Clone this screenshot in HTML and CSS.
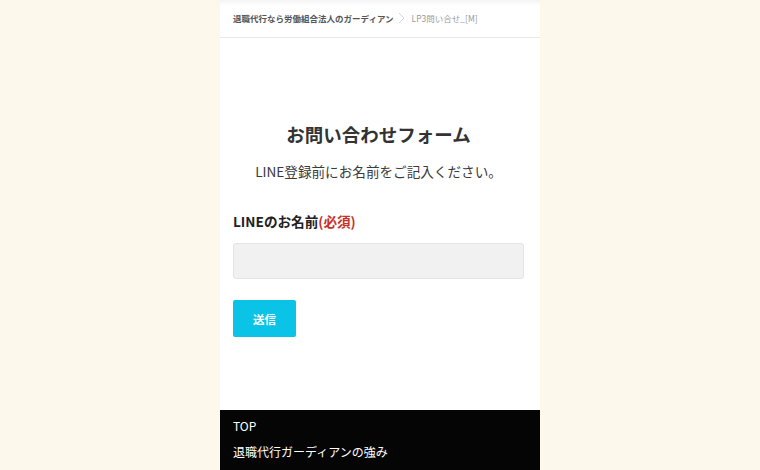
FILE: index.html
```html
<!DOCTYPE html>
<html lang="ja">
<head>
<meta charset="utf-8">
<title>LP3問い合せ_[M]</title>
<link rel="stylesheet" href="styles.css">
</head>
<body>
<div class="page">
  <nav class="crumbs">
    <span class="crumb-home">退職代行なら労働組合法人のガーディアン</span>
    <svg class="chev" width="7" height="12" viewBox="0 0 7 12"><path d="M1 1l5 5-5 5" fill="none" stroke="#d4d4d4" stroke-width="1"/></svg>
    <span class="crumb-cur">LP3問い合せ_[M]</span>
  </nav>
  <main class="content">
    <h1 class="title">お問い合わせフォーム</h1>
    <p class="lead">LINE登録前にお名前をご記入ください。</p>
    <form class="form">
      <label class="label">LINEのお名前<span class="req">(必須)</span></label>
      <input class="field" type="text">
      <button class="submit" type="button">送信</button>
    </form>
  </main>
  <footer class="foot">
    <a class="foot-link">TOP</a>
    <a class="foot-link">退職代行ガーディアンの強み</a>
  </footer>
</div>
</body>
</html>
```
FILE: styles.css
```css
html, body {
  margin: 0;
  padding: 0;
  background: #fcf8ec;
  height: 100%;
  overflow: hidden;
}
body {
  font-family: "Noto Sans CJK JP", "Noto Sans", sans-serif;
  color: #333;
}
.page {
  width: 320px;
  margin: 0 auto;
  background: #fff;
  min-height: 470px;
  display: flex;
  flex-direction: column;
}
.crumbs {
  height: 38px;
  box-sizing: border-box;
  border-bottom: 1px solid #e8e8e8;
  background: linear-gradient(#f4f4f4, #fff 6px);
  display: flex;
  align-items: center;
  padding: 0 13px 1px;
  gap: 4px;
  font-size: 8.5px;
  white-space: nowrap;
}
.crumb-home {
  color: #555;
  font-weight: bold;
}
.crumb-cur {
  color: #9a9a9a;
  margin-left: 3px;
}
.chev { flex: none; }
.content {
  padding: 80px 16px 0 13px;
  height: 372px;
  box-sizing: border-box;
}
.title {
  margin: 0;
  text-align: center;
  font-size: 18.5px;
  font-weight: bold;
  line-height: 32px;
  color: #333;
}
.lead {
  margin: 11px 0 0;
  text-align: center;
  font-size: 13.6px;
  line-height: 20px;
  color: #3a3a3a;
}
.form {
  margin-top: 30px;
  display: flex;
  flex-direction: column;
  align-items: flex-start;
}
.label {
  font-size: 13.6px;
  font-weight: bold;
  line-height: 20px;
  color: #222;
}
.req { color: #c9302c; }
.field {
  margin-top: 12px;
  width: 291px;
  height: 36px;
  box-sizing: border-box;
  border: 1px solid #e4e4e4;
  border-radius: 3px;
  background: #f1f1f1;
}
.submit {
  margin-top: 21px;
  width: 63px;
  height: 37px;
  border: none;
  border-radius: 2px;
  background: #0bc3e6;
  color: #fff;
  font-family: inherit;
  font-size: 11.5px;
  font-weight: bold;
  padding: 0;
}
.foot {
  background: #050505;
  flex: 1;
  padding: 3px 13px 0;
  display: flex;
  flex-direction: column;
}
.foot-link {
  color: #fff;
  font-size: 12px;
  line-height: 26px;
}
```
